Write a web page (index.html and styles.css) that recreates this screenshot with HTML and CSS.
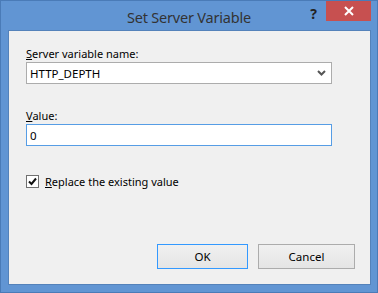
FILE: index.html
```html
<!DOCTYPE html>
<html lang="en">
<head>
  <meta charset="UTF-8" />
  <title>Set Server Variable</title>
  <link rel="stylesheet" href="styles.css">
</head>
<body>

  <div class="window">
    <div class="titlebar">
      <span></span>
      <div class="title">Set Server Variable</div>
      <div class="controls">
        <span class="help">?</span>
        <button class="close">
          <svg width="10" height="10" viewBox="0 0 10 10"><path d="M1 1 L9 9 M9 1 L1 9" stroke="#fff" stroke-width="2"/></svg>
        </button>
      </div>
    </div>

    <div class="content">
      <label class="field-label"><u>S</u>erver variable name:</label>
      <div class="select">
        <span>HTTP_DEPTH</span>
        <svg width="9" height="6" viewBox="0 0 9 6"><path d="M1 1 L4.5 4.5 L8 1" stroke="#555" stroke-width="2" fill="none"/></svg>
      </div>

      <label class="field-label value-label"><u>V</u>alue:</label>
      <div class="input">0</div>

      <div class="check-row">
        <span class="checkbox">
          <svg width="11" height="11" viewBox="0 0 11 11"><path d="M2 5.5 L4.5 8 L9 2.5" stroke="#111" stroke-width="2" fill="none"/></svg>
        </span>
        <span><u>R</u>eplace the existing value</span>
      </div>

      <div class="buttons">
        <button class="btn btn-default">OK</button>
        <button class="btn btn-cancel">Cancel</button>
      </div>
    </div>
  </div>

</body>
</html>
```

FILE: styles.css
```css
body {
  margin: 0;
  font-family: "Noto Sans", "Open Sans", sans-serif;
  font-size: 11px;
  color: #000;
  background: #fff;
}
.window {
  border: 1px solid #4a7bb7;
  background: #6195d3;
  padding: 0 6px 7px 7px;
  width: 363px;
  height: 284px;
  display: flex;
  flex-direction: column;
}
.titlebar {
  height: 29px;
  display: grid;
  grid-template-columns: 1fr auto 1fr;
  margin: 0 -6px 0 -7px;
}
.title {
  font-size: 14.5px;
  color: #333;
  padding-top: 6px;
  letter-spacing: -0.2px;
}
.controls {
  justify-self: end;
  display: flex;
  align-items: flex-start;
  padding-right: 6px;
}
.help {
  font-weight: bold;
  font-size: 14px;
  color: #222;
  margin-right: 9px;
  padding-top: 3px;
}
.close {
  width: 45px;
  height: 20px;
  border: none;
  background: #c75050;
  display: flex;
  align-items: center;
  justify-content: center;
  padding: 0;
}
.content {
  flex: 1;
  background: #f0f0f0;
  border: 1px solid #5482ba;
  padding: 15px 0 0 17px;
  display: flex;
  flex-direction: column;
}
.field-label {
  line-height: 16px;
}
.select,
.input {
  width: 306px;
  height: 22px;
  background: #fff;
  border: 1px solid #acacac;
  display: flex;
  align-items: center;
  justify-content: space-between;
  padding: 0 5px 0 3px;
  box-sizing: border-box;
  font-size: 11.5px;
}
.input {
  border-color: #569de5;
}
.value-label {
  margin-top: 24px;
}
.check-row {
  display: flex;
  align-items: center;
  margin-top: 28px;
  gap: 6px;
}
.checkbox {
  width: 11px;
  height: 11px;
  border: 1px solid #707070;
  background: #fff;
  display: flex;
}
.buttons {
  display: flex;
  gap: 10px;
  margin-top: 55px;
  margin-left: 131px;
}
.btn {
  height: 25px;
  font-family: inherit;
  font-size: 11.5px;
  color: #000;
  background: linear-gradient(#f0f0f0, #e5e5e5);
  border: 1px solid #acacac;
  padding: 0;
}
.btn-default {
  width: 91px;
  border-color: #3399ff;
}
.btn-cancel {
  width: 97px;
}
```
